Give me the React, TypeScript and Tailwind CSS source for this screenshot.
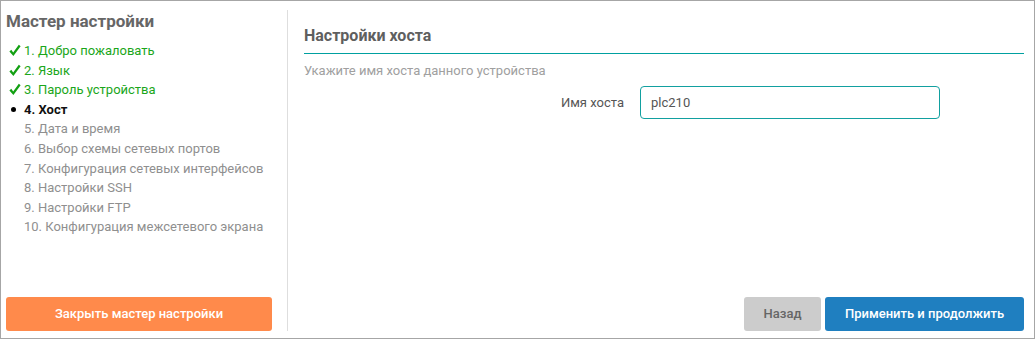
import { useState } from 'react';

type Step = { label: string; state: 'done' | 'current' | 'todo' };

const steps: Step[] = [
  { label: '1. Добро пожаловать', state: 'done' },
  { label: '2. Язык', state: 'done' },
  { label: '3. Пароль устройства', state: 'done' },
  { label: '4. Хост', state: 'current' },
  { label: '5. Дата и время', state: 'todo' },
  { label: '6. Выбор схемы сетевых портов', state: 'todo' },
  { label: '7. Конфигурация сетевых интерфейсов', state: 'todo' },
  { label: '8. Настройки SSH', state: 'todo' },
  { label: '9. Настройки FTP', state: 'todo' },
  { label: '10. Конфигурация межсетевого экрана', state: 'todo' },
];

const CheckIcon = () => (
  <svg width="12" height="13" viewBox="0 0 12 13" className="text-[#12a012]">
    <path
      d="M0.4 7.4 L2.3 5.8 L4.2 8.4 L9.8 0.8 L11.6 2.2 L4.4 12 Z"
      fill="currentColor"
    />
  </svg>
);

const StepItem = ({ step }: { step: Step }) => {
  if (step.state === 'done') {
    return (
      <li className="flex items-center h-[19.6px] text-[#1aa61a]">
        <span className="w-[18px] pl-[3px] flex items-center">
          <CheckIcon />
        </span>
        {step.label}
      </li>
    );
  }
  if (step.state === 'current') {
    return (
      <li className="flex items-center h-[19.6px] font-bold text-[#111]">
        <span className="w-[18px] pl-[5px] flex items-center">
          <span className="w-[5px] h-[5px] rounded-full bg-black" />
        </span>
        {step.label}
      </li>
    );
  }
  return (
    <li className="flex items-center h-[19.6px] pl-[18px] text-[#8f8f8f]">
      {step.label}
    </li>
  );
};

export default function App() {
  const [hostname, setHostname] = useState('plc210');

  return (
    <div className="w-[1035px] h-[340px] bg-white font-['Roboto',sans-serif]">
      <div className="flex h-[339px] border border-[#a6a6a6] pt-[9px] pb-[7px]">
        {/* wizard steps */}
        <aside className="w-[287px] shrink-0 flex flex-col border-r border-[#dedede] pl-[5px] pr-[15px]">
          <h1 className="text-[17px] leading-[22px] font-bold text-[#666]">
            Мастер настройки
          </h1>
          <ul className="mt-[9px] text-[13px]">
            {steps.map((step) => (
              <StepItem key={step.label} step={step} />
            ))}
          </ul>
          <button className="mt-auto h-[34px] rounded-[3px] bg-[#ff8a4b] text-[13px] font-medium text-white">
            Закрыть мастер настройки
          </button>
        </aside>

        {/* host settings */}
        <main className="flex-1 flex flex-col pl-[16px] pr-[10px]">
          <h2 className="mt-[16px] pb-[7px] border-b border-[#00a0a0] text-[16px] leading-[20px] font-bold text-[#5f5f5f]">
            Настройки хоста
          </h2>
          <p className="mt-[9px] text-[13px] leading-[16px] text-[#a0a0a0]">
            Укажите имя хоста данного устройства
          </p>
          <div className="mt-[7px] flex items-center">
            <label className="w-[320px] text-right text-[13px] text-[#555]">Имя хоста</label>
            <input
              value={hostname}
              onChange={(e) => setHostname(e.target.value)}
              className="ml-[16px] w-[300px] h-[33px] rounded-[4px] border border-[#12a0a0] px-[10px] text-[13px] text-[#555] outline-none"
            />
          </div>
          <div className="mt-auto flex justify-end gap-[4px]">
            <button className="w-[77px] h-[34px] rounded-[3px] bg-[#cccccc] text-[13px] font-medium text-[#666]">
              Назад
            </button>
            <button className="w-[199px] h-[34px] rounded-[3px] bg-[#1f7fc0] text-[13px] font-medium text-white">
              Применить и продолжить
            </button>
          </div>
        </main>
      </div>
    </div>
  );
}
